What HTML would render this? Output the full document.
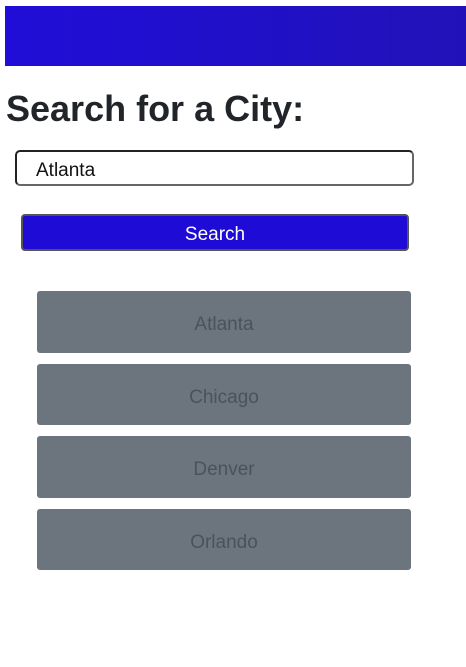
<!DOCTYPE html>
<html><head><style>
body{margin:0;background:#fff;font-family:"Liberation Sans",sans-serif;width:466px;height:667px;overflow:hidden;position:relative}
.hdr{position:absolute;left:5px;top:6px;width:461px;height:60px;background:linear-gradient(90deg,#200ed8,#2112b8)}
h1{position:absolute;left:6px;top:88px;margin:0;font-size:36px;font-weight:bold;color:#212529;letter-spacing:0}
.inp{position:absolute;left:15px;top:150px;border:2px solid #222;border-right-color:#666;border-bottom-color:#666;border-radius:5px;width:395px;height:32px}
.inp span{position:absolute;left:19px;top:8px;font-size:19px;color:#111}
.btn{position:absolute;left:21px;top:214px;width:384px;height:33px;background:#1f0bd6;border:2px solid #555;border-radius:4px;color:#fff;font-size:19px;text-align:center;line-height:37px}
.it{position:absolute;left:37px;width:374px;background:#6c757d;border-radius:3px;color:#4a525a;font-size:19px;text-align:center}
</style></head><body>
<div class="hdr"></div>
<h1>Search for a City:</h1>
<div class="inp"><span>Atlanta</span></div>
<div class="btn">Search</div>
<div class="it" style="top:291px;height:62px;line-height:67px">Atlanta</div>
<div class="it" style="top:364px;height:61px;line-height:67px">Chicago</div>
<div class="it" style="top:436px;height:62px;line-height:67px">Denver</div>
<div class="it" style="top:509px;height:61px;line-height:67px">Orlando</div>
</body></html>
